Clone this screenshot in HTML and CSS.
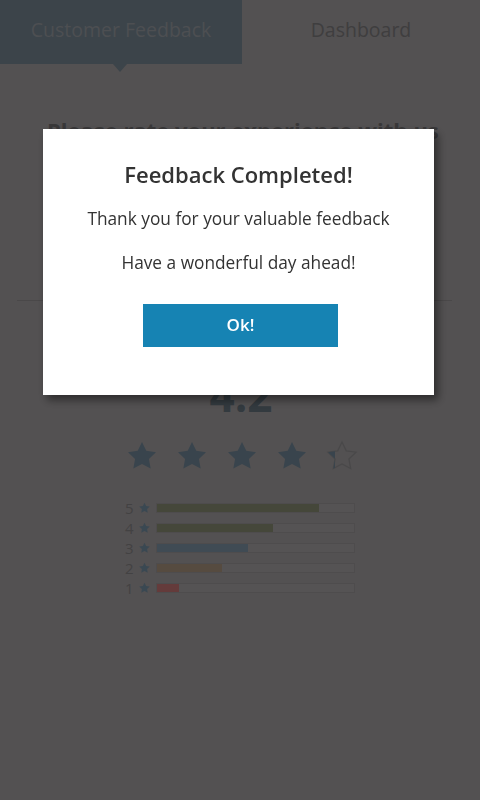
FILE: index.html
```html
<!DOCTYPE html>
<html lang="en">
<head>
<meta charset="utf-8">
<title>Customer Feedback</title>
<link rel="stylesheet" href="styles.css">
</head>
<body>
<div class="page">
  <nav class="tabs">
    <div class="tab tab-active">Customer Feedback</div>
    <div class="tab">Dashboard</div>
  </nav>
  <main class="content">
    <h2 class="prompt">Please rate your experience with us</h2>
    <hr class="divider">
    <section class="summary">
      <div class="score">4.2</div>
      <div class="stars">
        <svg class="star" viewBox="0 0 24 24"><path d="M12 1.5l3.2 6.6 7.3 1-5.3 5.1 1.3 7.2L12 18l-6.5 3.4 1.3-7.2L1.5 9.1l7.3-1z"/></svg>
        <svg class="star" viewBox="0 0 24 24"><path d="M12 1.5l3.2 6.6 7.3 1-5.3 5.1 1.3 7.2L12 18l-6.5 3.4 1.3-7.2L1.5 9.1l7.3-1z"/></svg>
        <svg class="star" viewBox="0 0 24 24"><path d="M12 1.5l3.2 6.6 7.3 1-5.3 5.1 1.3 7.2L12 18l-6.5 3.4 1.3-7.2L1.5 9.1l7.3-1z"/></svg>
        <svg class="star" viewBox="0 0 24 24"><path d="M12 1.5l3.2 6.6 7.3 1-5.3 5.1 1.3 7.2L12 18l-6.5 3.4 1.3-7.2L1.5 9.1l7.3-1z"/></svg>
        <svg class="star star-part" viewBox="0 0 24 24">
          <defs><clipPath id="partial"><rect x="0" y="0" width="6.8" height="24"/></clipPath></defs>
          <path class="star-outline" d="M12 1.5l3.2 6.6 7.3 1-5.3 5.1 1.3 7.2L12 18l-6.5 3.4 1.3-7.2L1.5 9.1l7.3-1z"/>
          <path class="star-fill" clip-path="url(#partial)" d="M12 1.5l3.2 6.6 7.3 1-5.3 5.1 1.3 7.2L12 18l-6.5 3.4 1.3-7.2L1.5 9.1l7.3-1z"/>
        </svg>
      </div>
      <div class="bars">
        <div class="bar-row">
          <span class="bar-num">5</span>
          <svg class="mini-star" viewBox="0 0 24 24"><path d="M12 1.5l3.2 6.6 7.3 1-5.3 5.1 1.3 7.2L12 18l-6.5 3.4 1.3-7.2L1.5 9.1l7.3-1z"/></svg>
          <div class="track"><div class="fill fill-5" style="width:82%"></div></div>
        </div>
        <div class="bar-row">
          <span class="bar-num">4</span>
          <svg class="mini-star" viewBox="0 0 24 24"><path d="M12 1.5l3.2 6.6 7.3 1-5.3 5.1 1.3 7.2L12 18l-6.5 3.4 1.3-7.2L1.5 9.1l7.3-1z"/></svg>
          <div class="track"><div class="fill fill-4" style="width:59%"></div></div>
        </div>
        <div class="bar-row">
          <span class="bar-num">3</span>
          <svg class="mini-star" viewBox="0 0 24 24"><path d="M12 1.5l3.2 6.6 7.3 1-5.3 5.1 1.3 7.2L12 18l-6.5 3.4 1.3-7.2L1.5 9.1l7.3-1z"/></svg>
          <div class="track"><div class="fill fill-3" style="width:46%"></div></div>
        </div>
        <div class="bar-row">
          <span class="bar-num">2</span>
          <svg class="mini-star" viewBox="0 0 24 24"><path d="M12 1.5l3.2 6.6 7.3 1-5.3 5.1 1.3 7.2L12 18l-6.5 3.4 1.3-7.2L1.5 9.1l7.3-1z"/></svg>
          <div class="track"><div class="fill fill-2" style="width:33%"></div></div>
        </div>
        <div class="bar-row">
          <span class="bar-num">1</span>
          <svg class="mini-star" viewBox="0 0 24 24"><path d="M12 1.5l3.2 6.6 7.3 1-5.3 5.1 1.3 7.2L12 18l-6.5 3.4 1.3-7.2L1.5 9.1l7.3-1z"/></svg>
          <div class="track"><div class="fill fill-1" style="width:11%"></div></div>
        </div>
      </div>
    </section>
  </main>
</div>

<div class="overlay">
  <div class="modal">
    <h3 class="modal-title">Feedback Completed!</h3>
    <p class="modal-text">Thank you for your valuable feedback</p>
    <p class="modal-text modal-text-2">Have a wonderful day ahead!</p>
    <button class="modal-btn" type="button">Ok!</button>
  </div>
</div>
</body>
</html>
```

FILE: styles.css
```css
* { box-sizing: border-box; }

html, body {
  margin: 0;
  padding: 0;
}

body {
  width: 480px;
  height: 800px;
  overflow: hidden;
  background: #a6a2a4;
  font-family: "Open Sans", "Noto Sans", sans-serif;
}

.page {
  width: 480px;
  height: 800px;
}

.tabs {
  display: flex;
  height: 64px;
}

.tab {
  position: relative;
  flex: 1;
  display: flex;
  align-items: center;
  justify-content: center;
  font-size: 19.5px;
  color: #7e7c7e;
  padding-bottom: 6px;
}

.tab-active {
  flex: 0 0 242px;
  background: #788894;
  color: #9a9ea4;
}

.tab-active::after {
  content: "";
  position: absolute;
  left: 113px;
  top: 64px;
  border-left: 7px solid transparent;
  border-right: 7px solid transparent;
  border-top: 8px solid #788894;
}

.content {
  display: flex;
  flex-direction: column;
}

.prompt {
  margin: 51px 0 0 47px;
  font-size: 22px;
  line-height: 30px;
  font-weight: 700;
  color: #727072;
  white-space: nowrap;
}

.divider {
  margin: 155px 0 0 17px;
  width: 435px;
  height: 0;
  border: 0;
  border-top: 1px solid #949092;
}

.summary {
  display: flex;
  flex-direction: column;
  align-items: center;
}

.score {
  margin-top: 69px;
  font-size: 44px;
  line-height: 50px;
  font-weight: 700;
  color: #66747e;
  margin-left: 2px;
}

.stars {
  display: flex;
  gap: 14px;
  margin-top: 20px;
  margin-left: 4px;
}

.star {
  width: 36px;
  height: 32px;
  fill: #72899a;
}

.star-part .star-outline {
  fill: #a6a2a4;
  stroke: #939193;
  stroke-width: 1;
}

.star-part .star-fill {
  fill: #72899a;
}

.bars {
  margin-top: 26px;
  display: flex;
  flex-direction: column;
  width: 230px;
}

.bar-row {
  display: flex;
  align-items: center;
  height: 20px;
}

.bar-num {
  width: 13px;
  font-size: 15px;
  color: #868486;
}

.mini-star {
  width: 13px;
  height: 12px;
  fill: #7590a4;
}

.track {
  margin-left: 5px;
  flex: 1;
  height: 10px;
  background: #aaa6a8;
  border: 1px solid #9c989a;
}

.fill {
  height: 100%;
}

.fill-5, .fill-4 { background: #8a8e74; }
.fill-3 { background: #8096a8; }
.fill-2 { background: #ac9680; }
.fill-1 { background: #c87676; }

.overlay {
  position: fixed;
  inset: 0;
  background: rgba(0, 0, 0, 0.5);
  display: flex;
  align-items: flex-start;
  padding: 129px 0 0 43px;
}

.modal {
  width: 391px;
  height: 266px;
  background: #ffffff;
  box-shadow: 4px 5px 8px rgba(0, 0, 0, 0.45);
  display: flex;
  flex-direction: column;
  align-items: center;
  padding-top: 30px;
  color: #333333;
}

.modal-title {
  margin: 0;
  font-size: 22px;
  line-height: 30px;
  font-weight: 600;
}

.modal-text {
  margin: 18px 0 0;
  font-size: 17.3px;
  line-height: 24px;
}

.modal-text-2 {
  margin-top: 20px;
}

.modal-btn {
  margin: 29px 0 0 4px;
  width: 195px;
  height: 43px;
  border: 0;
  border-radius: 0;
  background: #1683b3;
  color: #ffffff;
  font-family: "Open Sans", "Noto Sans", sans-serif;
  font-size: 17px;
  font-weight: 600;
  padding: 0 0 3px;
}
```
